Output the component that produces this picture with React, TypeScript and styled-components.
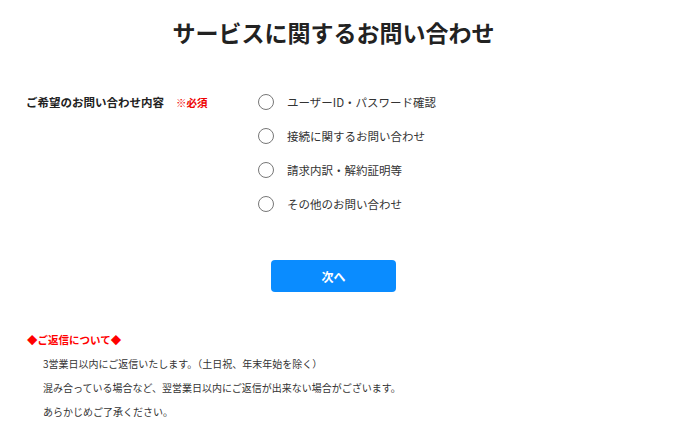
import React from "react";
import styled, { createGlobalStyle } from "styled-components";

const GlobalStyle = createGlobalStyle`
  html, body {
    margin: 0;
    padding: 0;
    background: #fff;
  }
  body {
    font-family: "Noto Sans CJK JP", "Noto Sans", sans-serif;
    color: #333;
  }
`;

const Page = styled.div`
  width: 667px;
  box-sizing: border-box;
  padding: 0 26px;
`;

const Title = styled.h1`
  margin: 0;
  padding-top: 15px;
  font-size: 23px;
  line-height: 34px;
  font-weight: 700;
  text-align: center;
  color: #222;
`;

const FormRow = styled.div`
  display: grid;
  grid-template-columns: 232px 1fr;
  margin-top: 36px;
`;

const Label = styled.div`
  font-size: 11.5px;
  font-weight: 700;
  line-height: 34px;
  color: #222;
  em {
    font-style: normal;
    color: #e00;
    margin-left: 12px;
    font-size: 10.5px;
  }
`;

const Options = styled.ul`
  list-style: none;
  margin: 0;
  padding: 0;
`;

const Option = styled.li`
  display: flex;
  align-items: center;
  gap: 13px;
  height: 34px;
  font-size: 11.5px;
  color: #333;
`;

const Radio = styled.span`
  width: 16px;
  height: 16px;
  box-sizing: border-box;
  border: 1.5px solid #777;
  border-radius: 50%;
  background: #fff;
  flex-shrink: 0;
`;

const ButtonArea = styled.div`
  display: flex;
  justify-content: center;
  margin-top: 39px;
`;

const NextButton = styled.button`
  width: 125px;
  height: 32px;
  border: none;
  border-radius: 4px;
  background: #0a8cff;
  color: #fff;
  font-family: inherit;
  font-size: 12px;
  font-weight: 700;
`;

const Notes = styled.section`
  margin-top: 36px;
  padding-left: 1px;
`;

const NotesTitle = styled.p`
  margin: 0;
  font-size: 10.5px;
  font-weight: 700;
  line-height: 24px;
  color: #f00;
`;

const NoteLine = styled.p`
  margin: 0;
  padding-left: 16px;
  font-size: 10px;
  line-height: 24px;
  color: #333;
`;

const options = [
  "ユーザーID・パスワード確認",
  "接続に関するお問い合わせ",
  "請求内訳・解約証明等",
  "その他のお問い合わせ",
];

export default function App() {
  return (
    <>
      <GlobalStyle />
      <Page>
        <Title>サービスに関するお問い合わせ</Title>
        <FormRow>
          <Label>
            ご希望のお問い合わせ内容<em>※必須</em>
          </Label>
          <Options>
            {options.map((o) => (
              <Option key={o}>
                <Radio />
                <span>{o}</span>
              </Option>
            ))}
          </Options>
        </FormRow>
        <ButtonArea>
          <NextButton>次へ</NextButton>
        </ButtonArea>
        <Notes>
          <NotesTitle>◆ご返信について◆</NotesTitle>
          <NoteLine>3営業日以内にご返信いたします。（土日祝、年末年始を除く）</NoteLine>
          <NoteLine>混み合っている場合など、翌営業日以内にご返信が出来ない場合がございます。</NoteLine>
          <NoteLine>あらかじめご了承ください。</NoteLine>
        </Notes>
      </Page>
    </>
  );
}
